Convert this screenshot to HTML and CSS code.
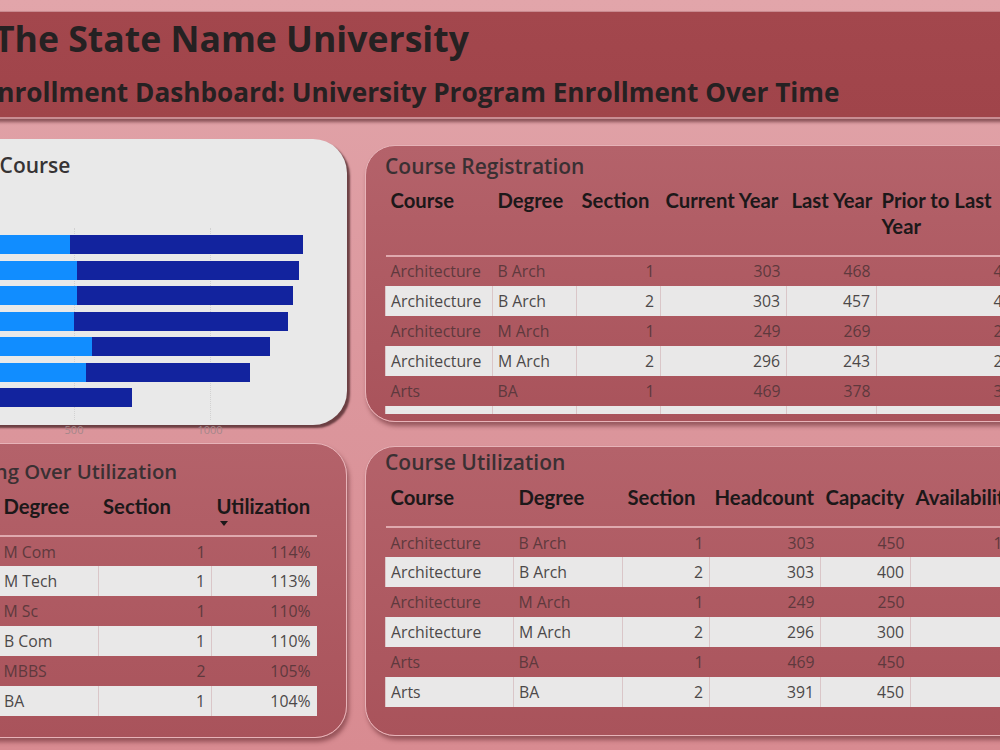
FILE: index.html
```html
<!DOCTYPE html>
<html lang="en">
<head>
<meta charset="utf-8">
<title>University Program Enrollment</title>
<link rel="stylesheet" href="styles.css">
</head>
<body>
<main class="report">
  <header class="banner">
    <h1 class="banner-title">The State Name University</h1>
    <p class="banner-subtitle">Enrollment Dashboard: University Program Enrollment Over Time</p>
  </header>

  <div class="board">
    <div class="col">
      <section class="card card-chart">
        <h2 class="card-title chart-title">Headcount by Course</h2>
        <div class="bar-chart">
          <ul class="bar-labels">
            <li>Engineering</li>
            <li>Commerce</li>
            <li>Science</li>
            <li>Architecture</li>
            <li>Arts</li>
            <li>Medicine</li>
            <li>Law</li>
          </ul>
          <div class="plot">
            <span class="gridline gridline-500"></span>
            <span class="gridline gridline-1000"></span>
            <div class="bar"><span class="seg seg-prev" style="width:132px"></span><span class="seg seg-curr" style="width:233px"></span></div>
            <div class="bar"><span class="seg seg-prev" style="width:139px"></span><span class="seg seg-curr" style="width:222px"></span></div>
            <div class="bar"><span class="seg seg-prev" style="width:139px"></span><span class="seg seg-curr" style="width:216px"></span></div>
            <div class="bar"><span class="seg seg-prev" style="width:136px"></span><span class="seg seg-curr" style="width:214px"></span></div>
            <div class="bar"><span class="seg seg-prev" style="width:154px"></span><span class="seg seg-curr" style="width:178px"></span></div>
            <div class="bar"><span class="seg seg-prev" style="width:148px"></span><span class="seg seg-curr" style="width:164px"></span></div>
            <div class="bar"><span class="seg seg-prev" style="width:48px"></span><span class="seg seg-curr" style="width:146px"></span></div>
            <div class="axis">
              <span class="tick tick-500">500</span>
              <span class="tick tick-1000">1000</span>
            </div>
          </div>
        </div>
      </section>

      <section class="card card-red card-over">
        <h2 class="card-title over-title">Courses Running Over Utilization</h2>
        <table class="data-table t-over">
          <colgroup>
            <col class="w-138"><col class="w-99"><col class="w-114"><col class="w-105">
          </colgroup>
          <thead>
            <tr><th>Course</th><th>Degree</th><th>Section</th><th class="sorted">Utilization<span class="sort-caret"></span></th></tr>
          </thead>
          <tbody>
            <tr><td>Commerce</td><td>M Com</td><td class="num">1</td><td class="num">114%</td></tr>
            <tr><td>Engineering</td><td>M Tech</td><td class="num">1</td><td class="num">113%</td></tr>
            <tr><td>Science</td><td>M Sc</td><td class="num">1</td><td class="num">110%</td></tr>
            <tr><td>Commerce</td><td>B Com</td><td class="num">1</td><td class="num">110%</td></tr>
            <tr><td>Medicine</td><td>MBBS</td><td class="num">2</td><td class="num">105%</td></tr>
            <tr><td>Arts</td><td>BA</td><td class="num">1</td><td class="num">104%</td></tr>
          </tbody>
        </table>
      </section>
    </div>

    <div class="col">
      <section class="card card-red card-reg">
        <h2 class="card-title">Course Registration</h2>
        <div class="table-wrap">
          <table class="data-table t-reg">
            <colgroup>
              <col class="w-107"><col class="w-84"><col class="w-84"><col class="w-126"><col class="w-90"><col class="w-150">
            </colgroup>
            <thead>
              <tr><th>Course</th><th>Degree</th><th>Section</th><th>Current Year</th><th>Last Year</th><th class="wrap">Prior to Last Year</th></tr>
            </thead>
            <tbody>
              <tr><td>Architecture</td><td>B Arch</td><td class="num">1</td><td class="num">303</td><td class="num">468</td><td class="num">412</td></tr>
              <tr><td>Architecture</td><td>B Arch</td><td class="num">2</td><td class="num">303</td><td class="num">457</td><td class="num">438</td></tr>
              <tr><td>Architecture</td><td>M Arch</td><td class="num">1</td><td class="num">249</td><td class="num">269</td><td class="num">231</td></tr>
              <tr><td>Architecture</td><td>M Arch</td><td class="num">2</td><td class="num">296</td><td class="num">243</td><td class="num">257</td></tr>
              <tr><td>Arts</td><td>BA</td><td class="num">1</td><td class="num">469</td><td class="num">378</td><td class="num">352</td></tr>
              <tr><td>Arts</td><td>BA</td><td class="num">2</td><td class="num">391</td><td class="num">384</td><td class="num">517</td></tr>
            </tbody>
          </table>
        </div>
      </section>

      <section class="card card-red card-util">
        <h2 class="card-title">Course Utilization</h2>
        <table class="data-table t-util">
          <colgroup>
            <col class="w-128"><col class="w-109"><col class="w-87"><col class="w-111"><col class="w-90"><col class="w-116">
          </colgroup>
          <thead>
            <tr><th>Course</th><th>Degree</th><th>Section</th><th>Headcount</th><th>Capacity</th><th>Availability</th></tr>
          </thead>
          <tbody>
            <tr><td>Architecture</td><td>B Arch</td><td class="num">1</td><td class="num">303</td><td class="num">450</td><td class="num">147</td></tr>
            <tr><td>Architecture</td><td>B Arch</td><td class="num">2</td><td class="num">303</td><td class="num">400</td><td class="num">97</td></tr>
            <tr><td>Architecture</td><td>M Arch</td><td class="num">1</td><td class="num">249</td><td class="num">250</td><td class="num">1</td></tr>
            <tr><td>Architecture</td><td>M Arch</td><td class="num">2</td><td class="num">296</td><td class="num">300</td><td class="num">4</td></tr>
            <tr><td>Arts</td><td>BA</td><td class="num">1</td><td class="num">469</td><td class="num">450</td><td class="num">0</td></tr>
            <tr><td>Arts</td><td>BA</td><td class="num">2</td><td class="num">391</td><td class="num">450</td><td class="num">59</td></tr>
          </tbody>
        </table>
      </section>
    </div>
  </div>
</main>
</body>
</html>
```

FILE: styles.css
```css
* { box-sizing: border-box; }

html, body {
  margin: 0;
  width: 1000px;
  height: 750px;
  overflow: hidden;
}

body {
  background: linear-gradient(180deg, #e2a5aa 0%, #dc989e 45%, #d88b91 100%);
  font-family: "Open Sans", "DejaVu Sans", sans-serif;
}

/* report canvas is wider than the window; its left part runs off-screen */
.report {
  margin-left: -160px;
  width: 1220px;
}

/* ---------- banner ---------- */
.banner {
  margin-top: 11px;
  height: 108px;
  padding-top: 5px;
  background: linear-gradient(180deg, #a3474d 0%, #a0444a 100%);
  border-top: 1px solid #c98a90;
  border-bottom: 2px solid #c98d93;
  box-shadow: 0 3px 3px rgba(70, 20, 25, 0.55);
}

.banner-title {
  margin: 0;
  padding-left: 154px;
  font-size: 35.6px;
  font-weight: 700;
  line-height: 1.2;
  color: #252122;
}

.banner-subtitle {
  margin: 17px 0 0;
  padding-left: 142.5px;
  font-size: 26.2px;
  font-weight: 700;
  line-height: 1.2;
  color: #252122;
}

/* ---------- board ---------- */
.board {
  display: grid;
  grid-template-columns: 507px 1fr;
  column-gap: 18px;
  align-items: start;
}

.col {
  display: flex;
  flex-direction: column;
}

.card-title {
  margin: 0 0 10px;
  font-size: 21px;
  font-weight: 600;
  line-height: 24px;
  color: #3a3033;
  white-space: nowrap;
}

.card-red {
  display: flex;
  flex-direction: column;
  background: linear-gradient(180deg, #b4626a 0%, #a9535b 100%);
  border: 1px solid #e7b3b8;
  box-shadow: 2px 4px 4px rgba(85, 28, 34, 0.5);
}

/* ---------- bar chart card ---------- */
.card-chart {
  position: relative;
  margin-top: 20px;
  height: 286px;
  padding-top: 14px;
  background: #e9e9e9;
  border-radius: 34px;
  box-shadow: 3px 3px 2px rgba(60, 25, 28, 0.7);
}

.chart-title {
  margin: 0;
  padding-left: 13px;
  color: #363334;
}

.bar-chart {
  display: grid;
  grid-template-columns: 92px 1fr;
  column-gap: 6px;
  margin-top: 58px;
}

.bar-labels {
  list-style: none;
  margin: 0;
  padding: 0;
  display: flex;
  flex-direction: column;
  gap: 6.5px;
  font-size: 12px;
  color: #666;
  text-align: right;
}

.bar-labels li {
  height: 19px;
  line-height: 19px;
}

.plot {
  position: relative;
  display: flex;
  flex-direction: column;
  gap: 6.5px;
}

.gridline {
  position: absolute;
  top: -7px;
  bottom: -13px;
  border-left: 1px dotted #d2d2d2;
}

.gridline-500 { left: 136px; }
.gridline-1000 { left: 272px; }

.bar {
  position: relative;
  display: flex;
  height: 19px;
}

.seg { height: 100%; }
.seg-prev { background: #118dff; }
.seg-curr { background: #12239e; }

.axis {
  position: absolute;
  left: 0;
  right: 0;
  top: calc(100% + 17px);
  height: 12px;
}

.tick {
  position: absolute;
  top: 0;
  transform: translateX(-50%);
  font-size: 11px;
  line-height: 12px;
  color: #a4878a;
}

.tick-500 { left: 136px; }
.tick-1000 { left: 272px; }

/* ---------- table cards ---------- */
.card-over {
  margin-top: 18px;
  height: 295px;
  padding: 15px 0 0 19px;
  border-radius: 0 32px 32px 0;
}

.over-title {
  text-indent: -6px;
  font-size: 20.3px;
}

.card-reg {
  margin-top: 26px;
  height: 277px;
  padding: 7.5px 0 7px 19px;
  border-radius: 30px 0 0 30px;
}

.card-reg .card-title { margin-bottom: 9px; }

.card-util {
  margin-top: 24px;
  height: 290px;
  padding: 3px 0 0 19px;
  border-radius: 30px 0 0 30px;
}

.table-wrap {
  flex: 1;
  overflow: hidden;
}

.data-table {
  border-collapse: collapse;
  table-layout: fixed;
}

.t-over { width: 456px; }
.t-reg { width: 641px; }
.t-util { width: 641px; }

.w-84 { width: 84px; }
.w-87 { width: 87px; }
.w-90 { width: 90px; }
.w-99 { width: 99.5px; }
.w-105 { width: 105px; }
.w-107 { width: 107px; }
.w-109 { width: 109px; }
.w-111 { width: 111px; }
.w-114 { width: 113.5px; }
.w-116 { width: 116px; }
.w-126 { width: 126px; }
.w-128 { width: 128px; }
.w-138 { width: 138px; }
.w-150 { width: 150px; }

.data-table th {
  padding: 0 5px 16px;
  font-family: "Lato", "Open Sans", sans-serif;
  font-size: 20.3px;
  font-weight: 700;
  line-height: 26px;
  color: #1c1819;
  text-align: left;
  vertical-align: top;
  white-space: nowrap;
}

.data-table th.wrap { white-space: normal; }

.data-table th.sorted { padding-bottom: 9px; }

.sort-caret {
  display: block;
  width: 0;
  height: 0;
  margin: 2px 0 0 3px;
  border-left: 4.5px solid transparent;
  border-right: 4.5px solid transparent;
  border-top: 5px solid #1c1819;
}

.data-table thead tr {
  border-bottom: 2px solid #dfa9ae;
}

.data-table tbody tr {
  height: 30px;
}

.data-table td {
  padding: 0 5px;
  font-size: 15.8px;
  color: #5e393d;
  white-space: nowrap;
  overflow: hidden;
  vertical-align: middle;
}

.data-table td.num {
  text-align: right;
  padding-right: 6px;
}

.data-table tbody tr:nth-child(even) td {
  background: #e9e8e8;
  color: #4c4849;
  border-left: 1px solid #dac6c8;
}
```
